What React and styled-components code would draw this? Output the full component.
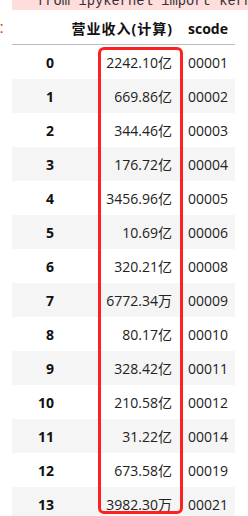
import styled, { createGlobalStyle } from "styled-components"

const GlobalStyle = createGlobalStyle`
  html, body {
    margin: 0;
    padding: 0;
    background: #fff;
  }
  body {
    width: 248px;
    height: 516px;
    overflow: hidden;
  }
`

const Page = styled.div`
  width: 248px;
  height: 516px;
  overflow: hidden;
  font-family: "Open Sans", "Noto Sans CJK SC", sans-serif;
  font-size: 14px;
  color: #222;
`

const Stderr = styled.div`
  margin-left: 12px;
  height: 10px;
  background: #fdd;
  overflow: hidden;
`

const StderrText = styled.pre`
  margin: -6px 0 0 0;
  padding-left: 25px;
  font-family: "Liberation Mono", monospace;
  font-size: 13.8px;
  line-height: 16px;
  color: #333;
  white-space: pre;
`

const Output = styled.div`
  display: flex;
  align-items: flex-start;
  padding-top: 2px;
`

const Prompt = styled.div`
  flex: 0 0 12px;
  box-sizing: border-box;
  display: flex;
  justify-content: flex-end;
  padding-right: 8px;
  overflow: hidden;
  font-family: "Liberation Sans", sans-serif;
  font-size: 17px;
  line-height: 32px;
  color: #d84315;
  white-space: nowrap;
`

const Table = styled.div`
  position: relative;
  width: 223px;
`

const Row = styled.div`
  display: grid;
  grid-template-columns: 51px 117px 55px;
  height: ${(p) => (p.$head ? "32px" : "34px")};
  align-items: center;
  background: ${(p) => (p.$striped ? "#f5f5f5" : "#fff")};
  border-bottom: ${(p) => (p.$head ? "1px solid #bdbdbd" : "none")};
`

const IndexCell = styled.div`
  text-align: right;
  padding-right: 9px;
  font-weight: 700;
  color: #111;
`

const ValueCell = styled.div`
  text-align: right;
  padding-right: ${(p) => (p.$head ? "7px" : "8px")};
  white-space: nowrap;
  letter-spacing: ${(p) => (p.$head ? "1px" : "0")};
  font-weight: ${(p) => (p.$head ? 700 : 400)};
  color: ${(p) => (p.$head ? "#111" : "#222")};
`

const CodeCell = styled.div`
  padding-left: 8px;
  white-space: nowrap;
  font-weight: ${(p) => (p.$head ? 700 : 400)};
  color: ${(p) => (p.$head ? "#111" : "#222")};
`

const Highlight = styled.div`
  position: absolute;
  left: 86px;
  top: 35px;
  width: 85px;
  height: 467px;
  box-sizing: border-box;
  border: 3px solid #fe2121;
  border-radius: 6px;
  pointer-events: none;
`

const rows = [
  ["2242.10亿", "00001"],
  ["669.86亿", "00002"],
  ["344.46亿", "00003"],
  ["176.72亿", "00004"],
  ["3456.96亿", "00005"],
  ["10.69亿", "00006"],
  ["320.21亿", "00008"],
  ["6772.34万", "00009"],
  ["80.17亿", "00010"],
  ["328.42亿", "00011"],
  ["210.58亿", "00012"],
  ["31.22亿", "00014"],
  ["673.58亿", "00019"],
  ["3982.30万", "00021"],
]

const App = () => {
  return (
    <Page>
      <GlobalStyle />
      <Stderr>
        <StderrText>from ipykernel import kernelapp as app</StderrText>
      </Stderr>
      <Output>
        <Prompt>
          <span>Out[5]:</span>
        </Prompt>
        <Table>
          <Row $head>
            <IndexCell />
            <ValueCell $head>营业收入(计算)</ValueCell>
            <CodeCell $head>scode</CodeCell>
          </Row>
          {rows.map(([value, code], i) => (
            <Row key={code} $striped={i % 2 === 1}>
              <IndexCell>{i}</IndexCell>
              <ValueCell>{value}</ValueCell>
              <CodeCell>{code}</CodeCell>
            </Row>
          ))}
          <Highlight />
        </Table>
      </Output>
    </Page>
  )
}

export default App
